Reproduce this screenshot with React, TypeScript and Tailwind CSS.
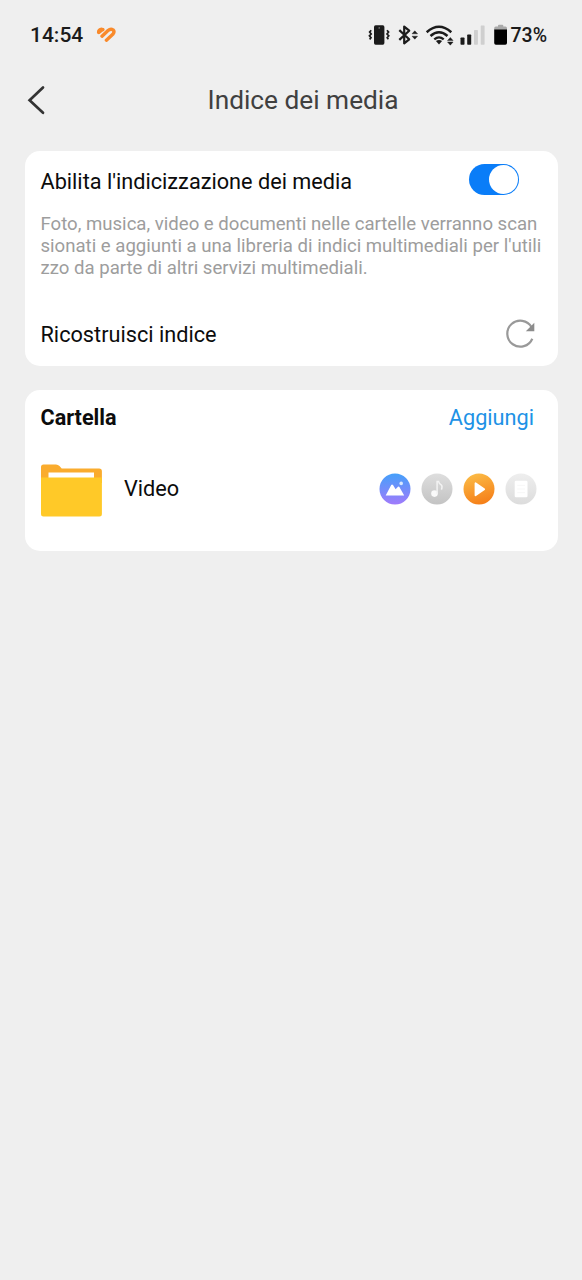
function StatusIcons() {
  return (
    <svg width="143" height="28" viewBox="367 21 143 28" className="block shrink-0" fill="none" stroke="#1b1b1b">
      {/* vibrate */}
      <rect x="374" y="25.3" width="10.4" height="19.4" rx="1.6" fill="#1b1b1b" stroke="none" />
      <circle cx="379.2" cy="27.9" r="0.7" fill="#aaa" stroke="none" />
      <path d="M371.2 30.2l-1.6 1.9 1.6 1.9-1.8 1.9 1.6 1.9-1.4 1.5M387 30.2l1.6 1.9-1.6 1.9 1.8 1.9-1.6 1.9 1.2 1.5" strokeWidth="1.7" />
      {/* bluetooth */}
      <path d="M399.3 30.1L409.2 39.3 404.2 43.4V26.6L409.2 30.7 399.3 39.9" strokeWidth="2.2" strokeLinejoin="round" />
      <path d="M412 33.8l2.8-3 2.8 3zM412 36.2h5.6l-2.8 3z" fill="#1b1b1b" stroke="#1b1b1b" strokeWidth="0.4" />
      {/* wifi */}
      <path d="M426.7 32.2Q439 21.4 451.3 32.2" strokeWidth="2.5" />
      <path d="M430.5 36Q439 28.4 447.5 36" strokeWidth="2.5" />
      <path d="M434.3 39.4Q439 35.3 443.7 39.4" strokeWidth="2.3" />
      <path d="M435.9 41.1Q439 38.9 442.1 41.1L439 44.6z" fill="#1b1b1b" stroke="none" />
      <path d="M447.5 40.6l2.8-3.2 2.8 3.2zM447.5 42h5.6l-2.8 3.2z" fill="#1b1b1b" stroke="#1b1b1b" strokeWidth="0.4" />
      {/* signal */}
      <g stroke="none">
        <rect x="460.5" y="37.6" width="4" height="7.1" rx="0.7" fill="#1b1b1b" />
        <rect x="467.2" y="34.6" width="4" height="10.1" rx="0.7" fill="#1b1b1b" />
        <rect x="474" y="30" width="3.9" height="14.7" rx="0.7" fill="#cfcfcf" />
        <rect x="480.7" y="25.4" width="3.9" height="19.3" rx="0.7" fill="#cfcfcf" />
      </g>
      {/* battery */}
      <g stroke="none">
        <path d="M494.2 30V28.2Q494.2 26.6 495.8 26.6H498V25.8Q498 24.8 499 24.8H502.3Q503.3 24.8 503.3 25.8V26.6H505.4Q507 26.6 507 28.2V30z" fill="#aaa" />
        <path d="M494.2 29.4H507V43Q507 44.7 505.3 44.7H495.9Q494.2 44.7 494.2 43z" fill="#000" />
      </g>
    </svg>
  );
}

function PhotoIcon() {
  return (
    <svg width="32" height="32" viewBox="0 0 32 32">
      <defs>
        <linearGradient id="photo" x1="0" y1="0" x2="0" y2="1">
          <stop offset="0" stopColor="#45a0fa" />
          <stop offset="1" stopColor="#a07bfb" />
        </linearGradient>
      </defs>
      <circle cx="16" cy="16" r="15.5" fill="url(#photo)" />
      <path d="M6.7 22.4L12.2 12.1Q13.1 10.7 14 12.1L16.6 16.3 19 13.8Q19.8 13.1 20.4 13.9L25.2 22.4z" fill="#fff" />
      <circle cx="22.2" cy="10.4" r="1.8" fill="#d7e8ff" />
    </svg>
  );
}

function MusicIcon() {
  return (
    <svg width="32" height="32" viewBox="0 0 32 32">
      <defs>
        <linearGradient id="music" x1="0" y1="0" x2="0" y2="1">
          <stop offset="0" stopColor="#dedede" />
          <stop offset="1" stopColor="#c3c3c3" />
        </linearGradient>
      </defs>
      <circle cx="16" cy="16" r="15.5" fill="url(#music)" />
      <circle cx="13.5" cy="20.6" r="3.3" fill="#fafafa" />
      <path d="M16.1 21V8.4H17.5Q18 10.6 20.2 11.8Q21.8 13.1 20.4 16.6" fill="none" stroke="#f3f3f3" strokeWidth="1.5" />
    </svg>
  );
}

function PlayIcon() {
  return (
    <svg width="32" height="32" viewBox="0 0 32 32">
      <defs>
        <linearGradient id="play" x1="0.35" y1="0" x2="0.65" y2="1">
          <stop offset="0" stopColor="#fbba45" />
          <stop offset="1" stopColor="#f57d17" />
        </linearGradient>
      </defs>
      <circle cx="16" cy="16" r="15.5" fill="url(#play)" />
      <path d="M12.5 10.3V22.3L21.2 16.3z" fill="#fff" stroke="#fff" strokeWidth="1.8" strokeLinejoin="round" />
    </svg>
  );
}

function DocumentIcon() {
  return (
    <svg width="32" height="32" viewBox="0 0 32 32">
      <defs>
        <linearGradient id="doc" x1="0" y1="0" x2="0" y2="1">
          <stop offset="0" stopColor="#eeeeee" />
          <stop offset="1" stopColor="#dcdcdc" />
        </linearGradient>
      </defs>
      <circle cx="16" cy="16" r="15.5" fill="url(#doc)" />
      <rect x="9.7" y="7.8" width="12.8" height="16.4" rx="1.3" fill="#fff" />
      <path d="M12.2 12.3h7.8M12.2 16h7.8M12.2 19.7h7.8" stroke="#f7f7f7" strokeWidth="1" />
    </svg>
  );
}

export default function App() {
  return (
    <div className="flex min-h-[1280px] w-full flex-col bg-[#efefef] font-['Roboto',sans-serif] text-[#0c0c0c]">
      <header className="flex h-[70px] items-center justify-between pr-[35px] pl-[30px]">
        <div className="flex items-center gap-[12px]">
          <span className="text-[21px] leading-[28px] font-medium text-[#1b1b1b]">14:54</span>
          <svg width="22" height="18" viewBox="0 0 22 18" fill="none" stroke="#f98a2b" strokeLinecap="round" strokeLinejoin="round">
            <path d="M3.5 6.3Q3.3 3.4 6.7 3.2L8 3.6" strokeWidth="3.2" />
            <path d="M3.9 6.6L7.6 3.6" strokeWidth="3.2" />
            <path d="M7 10.2L13 4.6Q15.6 2.2 18 3.8Q20 5.8 17.8 8.3L11.4 14.2" strokeWidth="3.4" />
          </svg>
        </div>
        <div className="flex items-center">
          <StatusIcons />
          <span className="pt-[2px] text-[19.5px] leading-[28px] font-medium text-[#1b1b1b]">73%</span>
        </div>
      </header>

      <nav className="flex h-[60px] items-center pl-[26px]">
        <button aria-label="Indietro" className="w-[181.5px]">
          <svg width="20" height="30" viewBox="0 0 20 30" fill="none" stroke="#333" strokeWidth="2.7" strokeLinecap="round" strokeLinejoin="miter">
            <path d="M17 2.4L3.6 15.2 17 27.8" />
          </svg>
        </button>
        <h1 className="text-[26.25px] leading-[32px] whitespace-nowrap text-[#404040]">Indice dei media</h1>
      </nav>

      <main className="flex flex-col gap-[24px] pt-[21px] pr-[24.5px] pl-[25px]">
        <section className="h-[215px] rounded-[15px] bg-white pl-[15.5px]">
          <div className="flex h-[60px] items-center justify-between pr-[38.5px]">
            <span className="pt-[2px] text-[21.7px] leading-[28px] whitespace-nowrap">Abilita l'indicizzazione dei media</span>
            <button role="switch" aria-checked="true" aria-label="Indicizzazione" className="mb-[4px] flex h-[31px] w-[50.5px] items-center justify-end rounded-full bg-[#0a7df8] pr-px">
              <span className="size-[29px] rounded-full bg-white" />
            </button>
          </div>
          <p className="pt-[2px] text-[18.6px] leading-[22px] whitespace-nowrap text-[#9d9d9d]">
            Foto, musica, video e documenti nelle cartelle verranno scan
            <br />
            sionati e aggiunti a una libreria di indici multimediali per l'utili
            <br />
            zzo da parte di altri servizi multimediali.
          </p>
          <div className="mt-[40px] flex h-[30px] items-center justify-between pr-[21px]">
            <span className="pt-[2px] text-[21.7px] leading-[28px]">Ricostruisci indice</span>
            <svg width="32" height="32" viewBox="0 0 32 32" fill="none" stroke="#999" strokeWidth="2.2">
              <path d="M26.6 9.2A13 13 0 1 0 27.3 20.7" />
              <path d="M29.3 4.8V13.2H20.8z" fill="#8c8c8c" stroke="none" />
            </svg>
          </div>
        </section>

        <section className="h-[161px] rounded-[15px] bg-white pl-[15.5px]">
          <div className="flex h-[56px] items-center justify-between pr-[23.5px]">
            <h2 className="text-[21.6px] leading-[28px] font-bold">Cartella</h2>
            <button className="text-[21.7px] leading-[28px] text-[#2092e6]">Aggiungi</button>
          </div>
          <div className="flex h-[86px] items-center pr-[20.5px]">
            <svg width="62" height="56" viewBox="0 -2 62 56" className="shrink-0">
              <path d="M0 4Q0 1.5 2.5 1.5H15Q17 1.5 18.5 3L20.7 5.6H58.1Q60.9 5.6 60.9 8.4V20H0z" fill="#faac2e" />
              <rect x="7.5" y="9.5" width="45.5" height="6" fill="#fff" />
              <path d="M0 14.5H60.9V51Q60.9 53.5 58.4 53.5H2.5Q0 53.5 0 51z" fill="#ffc928" />
            </svg>
            <span className="flex-1 pl-[21.5px] text-[21.7px] leading-[28px]">Video</span>
            <div className="flex gap-[10px]">
              <PhotoIcon />
              <MusicIcon />
              <PlayIcon />
              <DocumentIcon />
            </div>
          </div>
        </section>
      </main>
    </div>
  );
}
